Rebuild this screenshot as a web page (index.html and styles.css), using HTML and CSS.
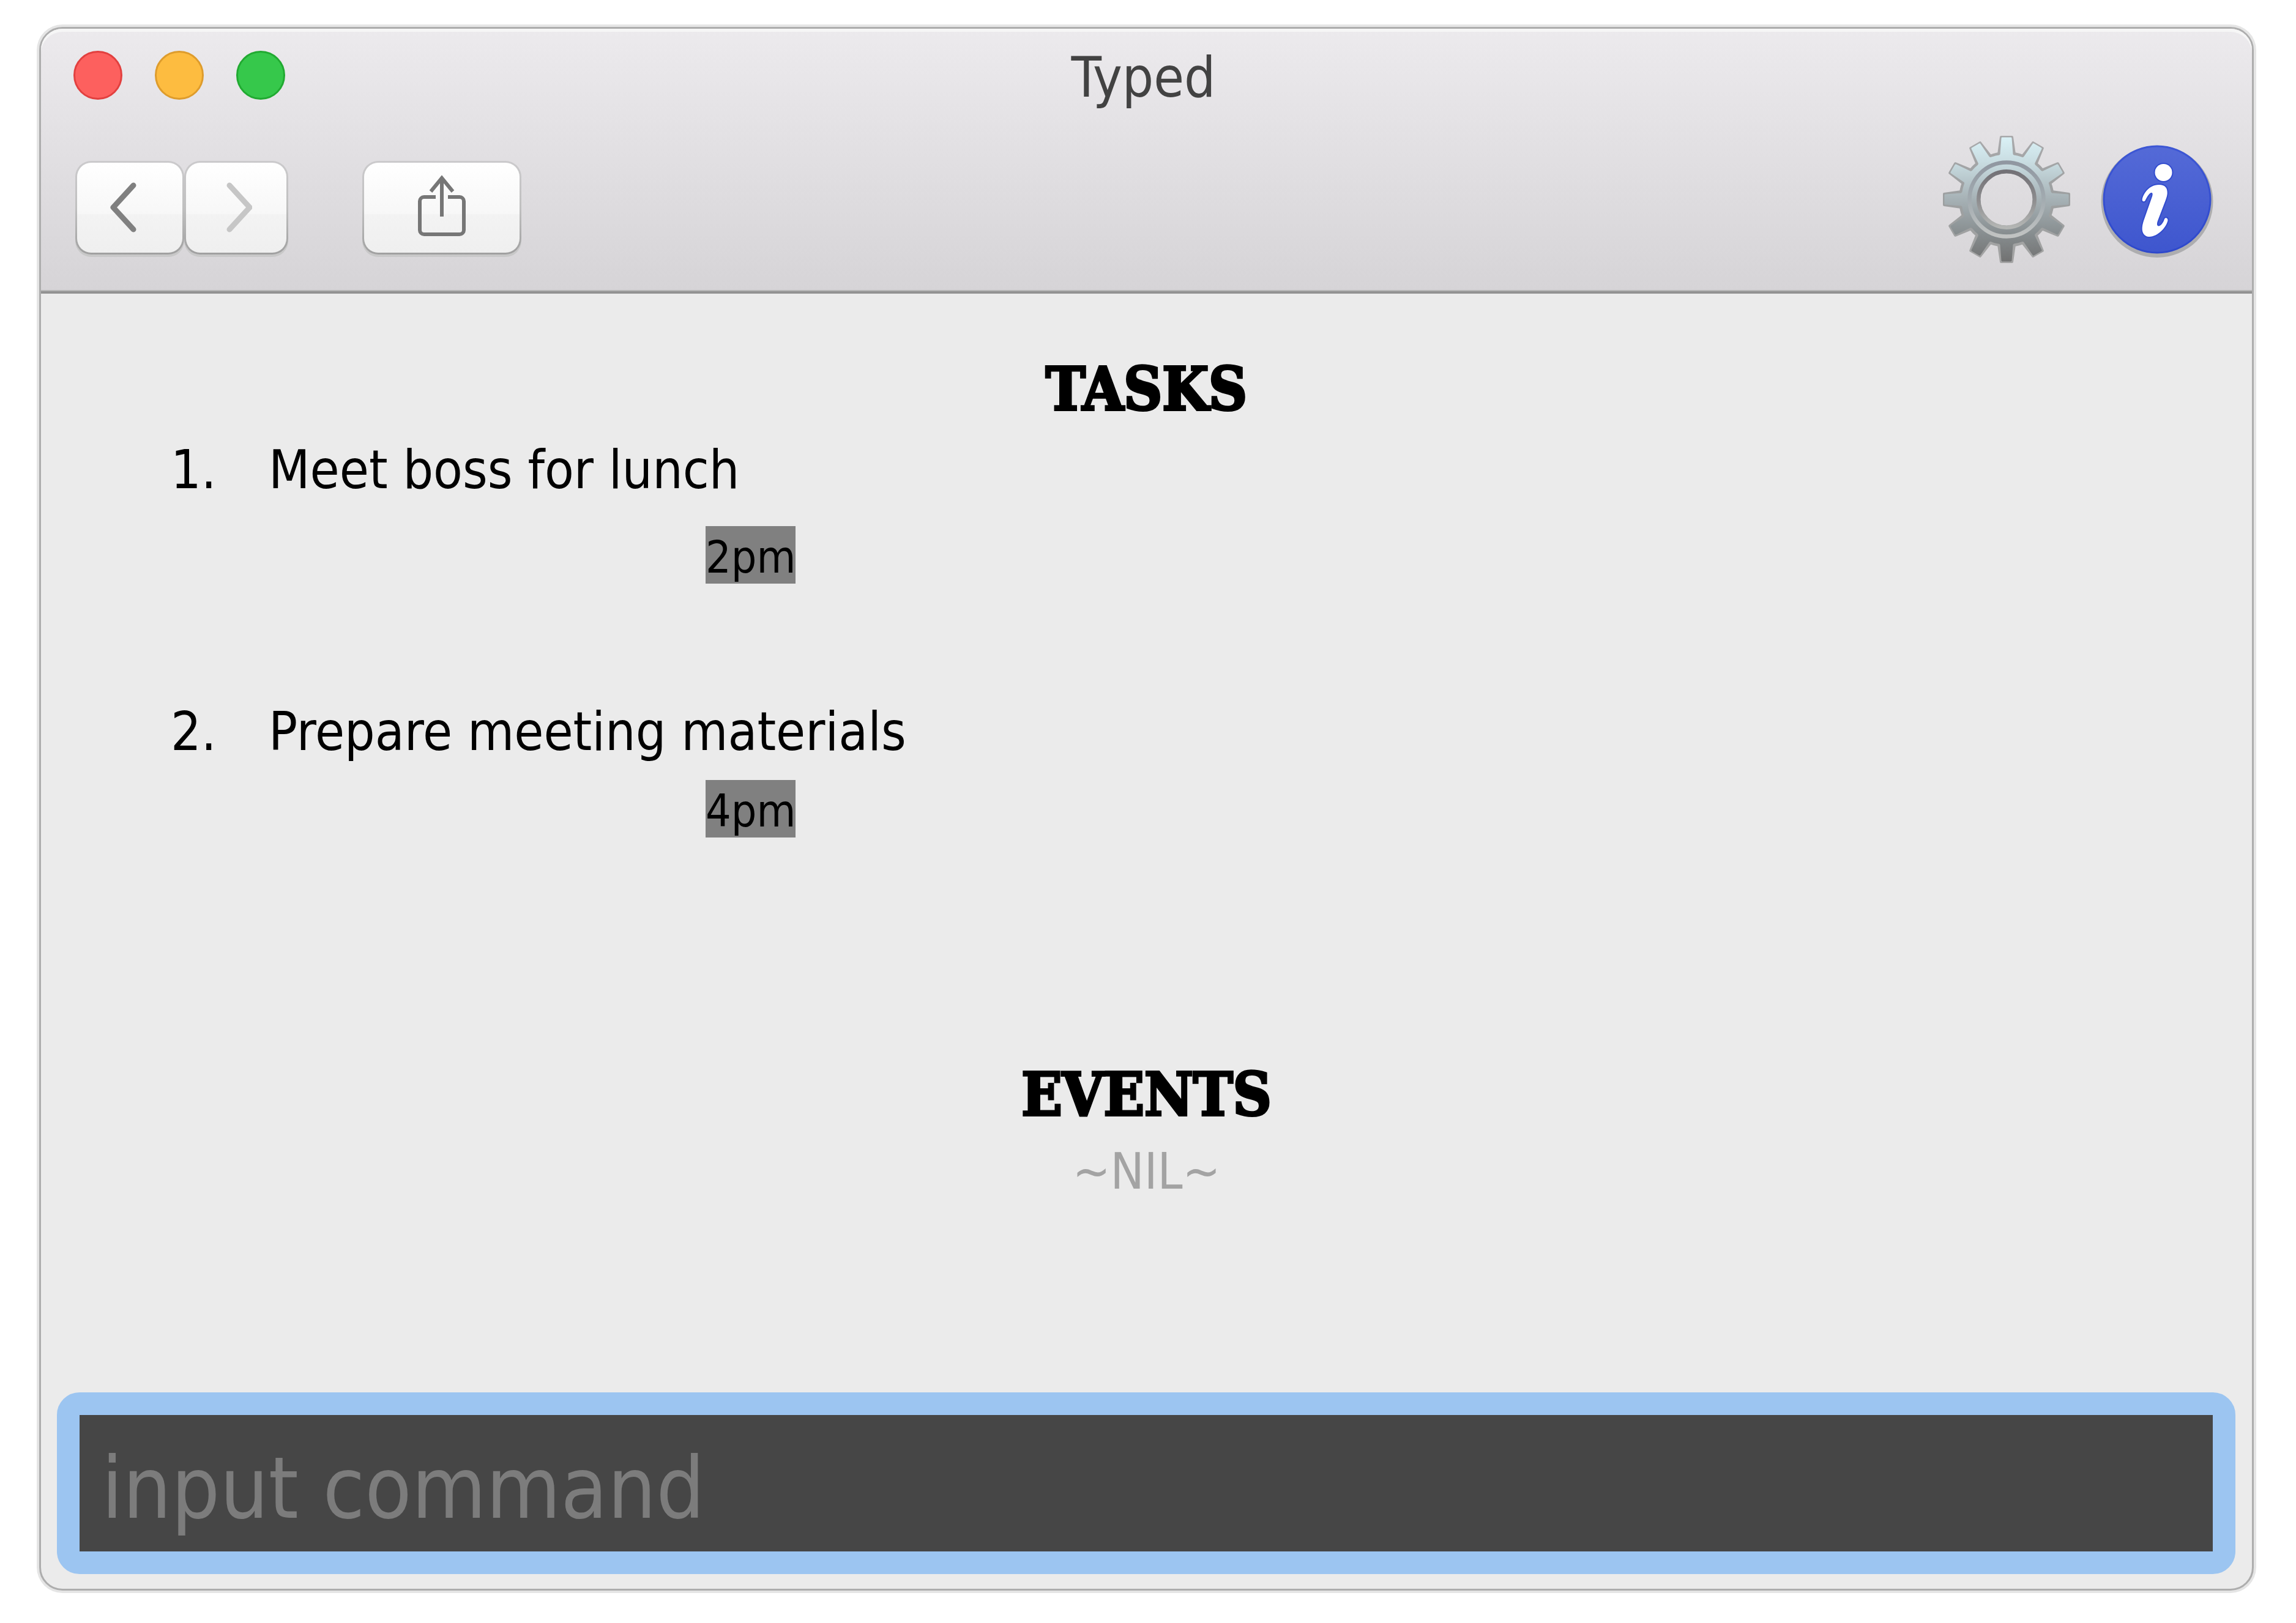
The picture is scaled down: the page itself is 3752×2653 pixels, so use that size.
FILE: index.html
```html
<!DOCTYPE html>
<html lang="en">
<head>
<meta charset="utf-8">
<title>Typed</title>
<link rel="stylesheet" href="styles.css">
</head>
<body>
<div class="window">
  <header class="header">
    <div class="titlebar">
      <div class="lights">
        <button class="light light-close" aria-label="Close"></button>
        <button class="light light-minimize" aria-label="Minimize"></button>
        <button class="light light-zoom" aria-label="Zoom"></button>
      </div>
      <h1 class="title">Typed</h1>
    </div>
    <div class="toolbar">
      <div class="actions">
        <button class="button button-back" aria-label="Back">
          <svg width="48" height="88" viewBox="0 0 48 88" fill="none" stroke="#808080" stroke-width="9" stroke-linecap="round" stroke-linejoin="round"><path d="M39 8 6 44l33 36"/></svg>
        </button>
        <button class="button button-forward" aria-label="Forward" disabled>
          <svg width="48" height="88" viewBox="0 0 48 88" fill="none" stroke="#c6c6c6" stroke-width="9" stroke-linecap="round" stroke-linejoin="round"><path d="M11 8l33 36-33 36"/></svg>
        </button>
        <button class="button button-share" aria-label="Share">
          <svg width="80" height="108" viewBox="0 0 80 108" fill="none" stroke="#767676" stroke-width="6"><path d="M30 37H11a7 7 0 0 0-7 7v47a7 7 0 0 0 7 7h58a7 7 0 0 0 7-7V44a7 7 0 0 0-7-7H50"/><path d="M40 7v62M22 28 40 6l18 22"/></svg>
        </button>
      </div>
      <div class="tools">
        <button class="tool" aria-label="Settings">
          <svg width="210" height="210" viewBox="-105 -105 210 210">
            <defs>
              <linearGradient id="metal" gradientUnits="userSpaceOnUse" x1="0" y1="-104" x2="0" y2="104"><stop offset="0" stop-color="#dbf2f7"/><stop offset=".2" stop-color="#c9dde2"/><stop offset=".5" stop-color="#a6b1b5"/><stop offset=".78" stop-color="#868c8e"/><stop offset="1" stop-color="#707070"/></linearGradient>
              <linearGradient id="rim" x1="0" y1="0" x2="0" y2="1"><stop offset="0" stop-color="#9097a1"/><stop offset=".5" stop-color="#a2abb0"/><stop offset="1" stop-color="#c1c3c2"/></linearGradient>
              <linearGradient id="bore" x1="0" y1="0" x2="0" y2="1"><stop offset="0" stop-color="#737176"/><stop offset=".5" stop-color="#8c8c8e"/><stop offset="1" stop-color="#b4b6b4"/></linearGradient>
              <linearGradient id="edge" x1="0" y1="0" x2="0" y2="1"><stop offset="0" stop-color="#a9a9ab"/><stop offset=".5" stop-color="#9c9fa0"/><stop offset="1" stop-color="#a4a4a4"/></linearGradient>
              <path id="tooth" d="M-9-102H9L13-74-13-74Z" stroke-linejoin="round"/>
              <path id="teeth-inner" d="M-7-100H7L9-74Q10-70 22-66H-22Q-10-70-9-74Z" stroke-linejoin="round"/>
              <mask id="gear-outer" maskUnits="userSpaceOnUse" x="-105" y="-105" width="210" height="210">
                <g fill="#fff" stroke="#fff" stroke-width="4">
                  <circle r="76"/>
                  <use href="#tooth"/><use href="#tooth" transform="rotate(30)"/><use href="#tooth" transform="rotate(60)"/><use href="#tooth" transform="rotate(90)"/><use href="#tooth" transform="rotate(120)"/><use href="#tooth" transform="rotate(150)"/><use href="#tooth" transform="rotate(180)"/><use href="#tooth" transform="rotate(210)"/><use href="#tooth" transform="rotate(240)"/><use href="#tooth" transform="rotate(270)"/><use href="#tooth" transform="rotate(300)"/><use href="#tooth" transform="rotate(330)"/>
                </g>
                <circle r="43"/>
              </mask>
              <mask id="gear-inner" maskUnits="userSpaceOnUse" x="-105" y="-105" width="210" height="210">
                <g fill="#fff" stroke="#fff" stroke-width="3">
                  <circle r="72"/>
                  <use href="#teeth-inner"/><use href="#teeth-inner" transform="rotate(30)"/><use href="#teeth-inner" transform="rotate(60)"/><use href="#teeth-inner" transform="rotate(90)"/><use href="#teeth-inner" transform="rotate(120)"/><use href="#teeth-inner" transform="rotate(150)"/><use href="#teeth-inner" transform="rotate(180)"/><use href="#teeth-inner" transform="rotate(210)"/><use href="#teeth-inner" transform="rotate(240)"/><use href="#teeth-inner" transform="rotate(270)"/><use href="#teeth-inner" transform="rotate(300)"/><use href="#teeth-inner" transform="rotate(330)"/>
                </g>
                <circle r="43"/>
              </mask>
            </defs>
            <rect x="-105" y="-105" width="210" height="210" fill="url(#edge)" mask="url(#gear-outer)"/>
            <rect x="-105" y="-105" width="210" height="210" fill="url(#metal)" mask="url(#gear-inner)"/>
            <circle r="60.5" fill="none" stroke="url(#rim)" stroke-width="6.5"/>
            <circle r="45.7" fill="none" stroke="url(#bore)" stroke-width="6.5"/>
          </svg>
        </button>
        <button class="tool" aria-label="Information">
          <svg width="184" height="190" viewBox="0 0 184 190">
            <defs>
              <linearGradient id="blue" x1="0" y1="0" x2="0" y2="1"><stop offset="0" stop-color="#546ad7"/><stop offset="1" stop-color="#3e56ce"/></linearGradient>
              <linearGradient id="blue-edge" x1="0" y1="0" x2="0" y2="1"><stop offset="0" stop-color="#3d57d5"/><stop offset="1" stop-color="#2e48cb"/></linearGradient>
            </defs>
            <circle cx="92" cy="98.5" r="91.5" fill="#adadaf"/>
            <circle cx="92" cy="95" r="87" fill="url(#blue)" stroke="url(#blue-edge)" stroke-width="3"/>
            <g fill="#fff" stroke="#324cce" stroke-width="4" paint-order="stroke">
              <circle cx="102.500" cy="51" r="14"/>
              <path d="M67.700 95C69 87 78 71 95 71C105 71 109 76 108.700 85C108.500 89 107 93 106 96L93 130C91 136 92 138.500 95 138.500C99 138 103 131 104 127C105.500 124 109.500 125 109.500 129C108 139 94 156 79 156C71 156 67 149 67.700 141C68 137 69 133 70 130L84 90C86 84 83 83 80.400 85C77 88 74 94 72.500 97C70.500 99.500 67 98 67.700 95Z"/>
            </g>
          </svg>
        </button>
      </div>
    </div>
  </header>
  <main class="content">
    <section class="section">
      <h2 class="heading">TASKS</h2>
      <ol class="tasks">
        <li class="task">
          <span class="number">1.</span>
          <span class="name">Meet boss for lunch</span>
          <time class="time time-spaced">2pm</time>
        </li>
        <li class="task">
          <span class="number">2.</span>
          <span class="name">Prepare meeting materials</span>
          <time class="time">4pm</time>
        </li>
      </ol>
    </section>
    <section class="section">
      <h2 class="heading">EVENTS</h2>
      <p class="empty">~NIL~</p>
    </section>
  </main>
  <input class="command" type="text" placeholder="input command" aria-label="Command">
</div>
</body>
</html>
```
FILE: styles.css
```css
* {
  box-sizing: border-box;
  margin: 0;
  padding: 0;
}

body {
  display: flex;
  min-height: 100vh;
  padding: 44px 69px 53px 64px;
  background: #fff;
  color: #000;
  font-family: "DejaVu Sans Condensed", "DejaVu Sans", sans-serif;
  font-size: 87px;
  line-height: 104px;
}

button {
  border: 0;
  background: none;
  font: inherit;
}

svg {
  display: block;
}

.window {
  display: flex;
  flex: 1;
  flex-direction: column;
  border: 3px solid #adadad;
  border-radius: 38px;
  background: #ebebeb;
  box-shadow: 0 0 0 4px #e5e5e5;
}

.header {
  padding: 36px 63px 45px 53px;
  border-bottom: 4px solid #929292;
  border-radius: 35px 35px 0 0;
  background: linear-gradient(#eceaed, #d6d4d7);
  box-shadow: inset 0 5px #f6f6f6, inset 0 -2px #b6b6b6;
}

.titlebar {
  display: grid;
  grid-template-columns: 1fr auto 1fr;
  margin-bottom: 50px;
}

.lights {
  display: flex;
  gap: 53px;
}

.light {
  width: 80px;
  height: 80px;
  border: 3px solid;
  border-radius: 50%;
}

.light-close {
  border-color: #e2403f;
  background: #fd605e;
}

.light-minimize {
  border-color: #de9c2c;
  background: #fdbc40;
}

.light-zoom {
  border-color: #21aa31;
  background: #36c84b;
}

.title {
  color: #424242;
  font-size: 90px;
  font-weight: 400;
  line-height: 88px;
}

.toolbar {
  display: flex;
  align-items: center;
  justify-content: space-between;
}

.actions {
  display: flex;
  padding: 26px 0 0 3px;
}

.button {
  display: flex;
  align-items: center;
  justify-content: center;
  height: 153px;
  border: 3px solid transparent;
  border-radius: 26px;
  background:
    linear-gradient(#fff, #f7f7f7 57%, #f3f3f3 57%, #efefef) padding-box,
    linear-gradient(#cbcacc, #c0c0c0 50%, #a0a0a0) border-box;
  box-shadow: 0 4px #c8c8c8;
}

.button-back {
  width: 178px;
  padding-right: 18px;
}

.button-forward {
  width: 170px;
  padding-left: 4px;
}

.button-share {
  width: 260px;
  margin-left: 121px;
}

.tools {
  display: flex;
  align-items: center;
  gap: 49px;
}

.content {
  padding-top: 96px;
}

.section + .section {
  margin-top: 157px;
}

.heading {
  margin-bottom: 20px;
  font-family: "DejaVu Serif Condensed", "DejaVu Serif", serif;
  font-size: 97px;
  font-weight: 700;
  line-height: 120px;
  text-align: center;
  -webkit-text-stroke: 4px #000;
}

.tasks {
  list-style: none;
}

.task {
  display: grid;
  grid-template-columns: 160px 1fr;
  align-content: start;
  min-height: 428px;
  padding-left: 212px;
}

.time {
  grid-column: 2;
  justify-self: start;
  margin: 27px 0 0 714px;
  padding-top: 8px;
  background: #808080;
  font-size: 73px;
  line-height: 86px;
}

.time-spaced {
  margin-top: 40px;
}

.empty {
  color: #a3a3a3;
  font-size: 82px;
  line-height: 92px;
  text-align: center;
}

.command {
  margin: auto 27px 24px 26px;
  padding: 16px 36px 0;
  height: 297px;
  border: 37px solid #9cc5f1;
  border-radius: 37px;
  outline: 0;
  background: #464646;
  color: #fff;
  font: inherit;
  font-size: 139px;
  line-height: 160px;
}

.command::placeholder {
  color: #7c7c7c;
  opacity: 1;
}
```
